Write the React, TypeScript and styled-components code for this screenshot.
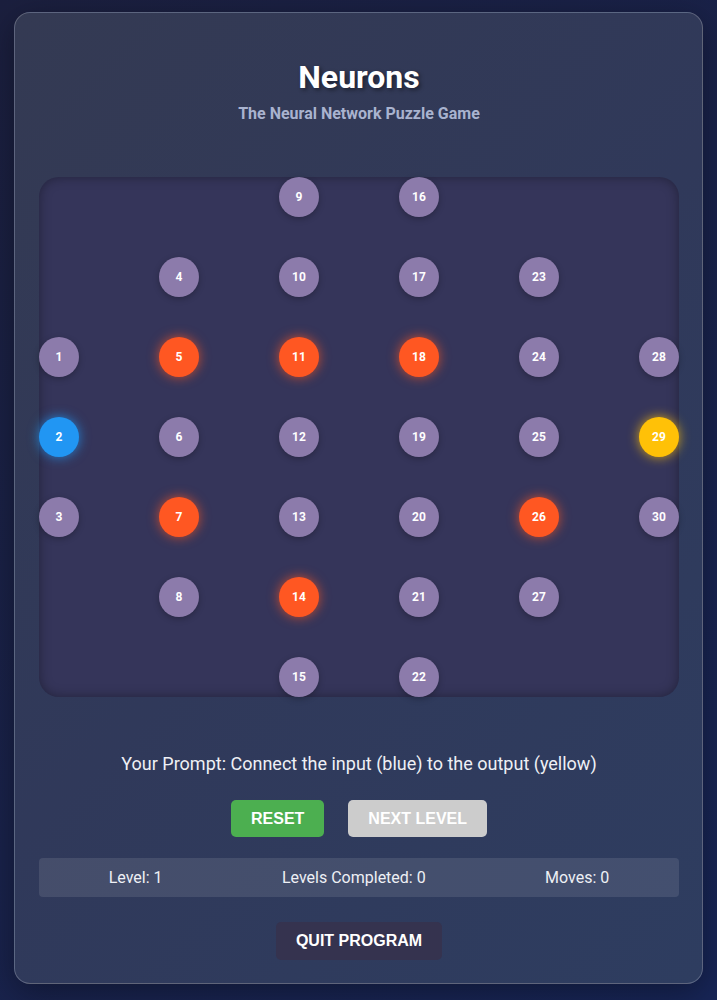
import React from "react";
import styled, { createGlobalStyle, css } from "styled-components";

const GlobalStyle = createGlobalStyle`
  html, body {
    margin: 0;
    padding: 0;
  }
  body {
    min-height: 1000px;
    background: linear-gradient(135deg, #1b1f3e 0%, #19224a 50%, #172556 100%);
    font-family: Roboto, "Noto Sans", sans-serif;
    color: #fff;
  }
`;

const Page = styled.div`
  padding: 12px 14px 16px;
`;

const Card = styled.main`
  box-sizing: border-box;
  height: 972px;
  border: 1px solid rgba(255, 255, 255, 0.22);
  border-radius: 16px;
  background: linear-gradient(135deg, #343a53 0%, #30395a 50%, #2e3d60 100%);
  box-shadow: 0 8px 32px rgba(0, 0, 0, 0.35);
  padding: 45px 23px 0 24px;
  display: flex;
  flex-direction: column;
  align-items: stretch;
`;

const Title = styled.h1`
  margin: 0;
  text-align: center;
  font-size: 32px;
  line-height: 38px;
  font-weight: 700;
  color: #ffffff;
  text-shadow: 2px 2px 4px rgba(0, 0, 0, 0.45);
`;

const Subtitle = styled.p`
  margin: 8px 0 0;
  text-align: center;
  font-size: 16px;
  line-height: 19px;
  font-weight: 700;
  color: #a9b3cf;
`;

const Board = styled.section`
  position: relative;
  margin-top: 54px;
  height: 520px;
  border-radius: 20px;
  background: #35355a;
  box-shadow: inset 0 0 12px rgba(0, 0, 0, 0.35);
`;

type Kind = "idle" | "active" | "input" | "output";

const kindStyles: Record<Kind, ReturnType<typeof css>> = {
  idle: css`
    background: #8c7bab;
    box-shadow: 0 2px 6px rgba(0, 0, 0, 0.25);
  `,
  active: css`
    background: #ff5722;
    box-shadow: 0 0 12px rgba(255, 87, 34, 0.75);
  `,
  input: css`
    background: #2196f3;
    box-shadow: 0 0 12px rgba(33, 150, 243, 0.8);
  `,
  output: css`
    background: #ffc107;
    box-shadow: 0 0 12px rgba(255, 193, 7, 0.8);
  `,
};

const Node = styled.div<{ $kind: Kind }>`
  position: absolute;
  width: 40px;
  height: 40px;
  border-radius: 50%;
  display: flex;
  align-items: center;
  justify-content: center;
  font-size: 12px;
  font-weight: 700;
  color: #ffffff;
  ${(p) => kindStyles[p.$kind]}
`;

const Prompt = styled.p`
  margin: 56px 0 0;
  text-align: center;
  font-size: 18px;
  line-height: 21px;
  color: #eef0f5;
`;

const ButtonRow = styled.div`
  margin-top: 26px;
  display: flex;
  justify-content: center;
  gap: 24px;
`;

const Button = styled.button<{ $tone: "green" | "grey" | "dark" }>`
  height: ${(p) => (p.$tone === "dark" ? "38px" : "37px")};
  padding: 0 20px;
  border: none;
  border-radius: 5px;
  font-family: "Liberation Sans", Arial, sans-serif;
  font-size: 16px;
  font-weight: 700;
  color: #ffffff;
  cursor: pointer;
  background: ${(p) =>
    p.$tone === "green" ? "#4caf50" : p.$tone === "grey" ? "#cccccc" : "#35334f"};
`;

const Stats = styled.div`
  margin-top: 21px;
  height: 39px;
  box-sizing: border-box;
  padding: 0 10px;
  border-radius: 4px;
  background: rgba(255, 255, 255, 0.1);
  display: flex;
  align-items: center;
  justify-content: space-around;
  font-size: 16px;
  color: #eef0f5;
`;

const QuitRow = styled.div`
  margin-top: 25px;
  display: flex;
  justify-content: center;
`;

type N = { id: number; col: number; row: number; kind: Kind };

const columns: { col: number; rows: number[]; start: number }[] = [
  { col: 0, rows: [2, 3, 4], start: 1 },
  { col: 1, rows: [1, 2, 3, 4, 5], start: 4 },
  { col: 2, rows: [0, 1, 2, 3, 4, 5, 6], start: 9 },
  { col: 3, rows: [0, 1, 2, 3, 4, 5, 6], start: 16 },
  { col: 4, rows: [1, 2, 3, 4, 5], start: 23 },
  { col: 5, rows: [2, 3, 4], start: 28 },
];

const active = new Set([5, 7, 11, 14, 18, 26]);

const nodes: N[] = columns.flatMap((c) =>
  c.rows.map((row, i) => {
    const id = c.start + i;
    const kind: Kind =
      id === 2 ? "input" : id === 29 ? "output" : active.has(id) ? "active" : "idle";
    return { id, col: c.col, row, kind };
  })
);

export default function App() {
  return (
    <>
      <GlobalStyle />
      <Page>
        <Card>
          <Title>Neurons</Title>
          <Subtitle>The Neural Network Puzzle Game</Subtitle>
          <Board>
            {nodes.map((n) => (
              <Node
                key={n.id}
                $kind={n.kind}
                style={{ left: n.col * 120, top: n.row * 80 }}
              >
                {n.id}
              </Node>
            ))}
          </Board>
          <Prompt>Your Prompt: Connect the input (blue) to the output (yellow)</Prompt>
          <ButtonRow>
            <Button $tone="green">RESET</Button>
            <Button $tone="grey">NEXT LEVEL</Button>
          </ButtonRow>
          <Stats>
            <span>Level: 1</span>
            <span>Levels Completed: 0</span>
            <span>Moves: 0</span>
          </Stats>
          <QuitRow>
            <Button $tone="dark">QUIT PROGRAM</Button>
          </QuitRow>
        </Card>
      </Page>
    </>
  );
}
